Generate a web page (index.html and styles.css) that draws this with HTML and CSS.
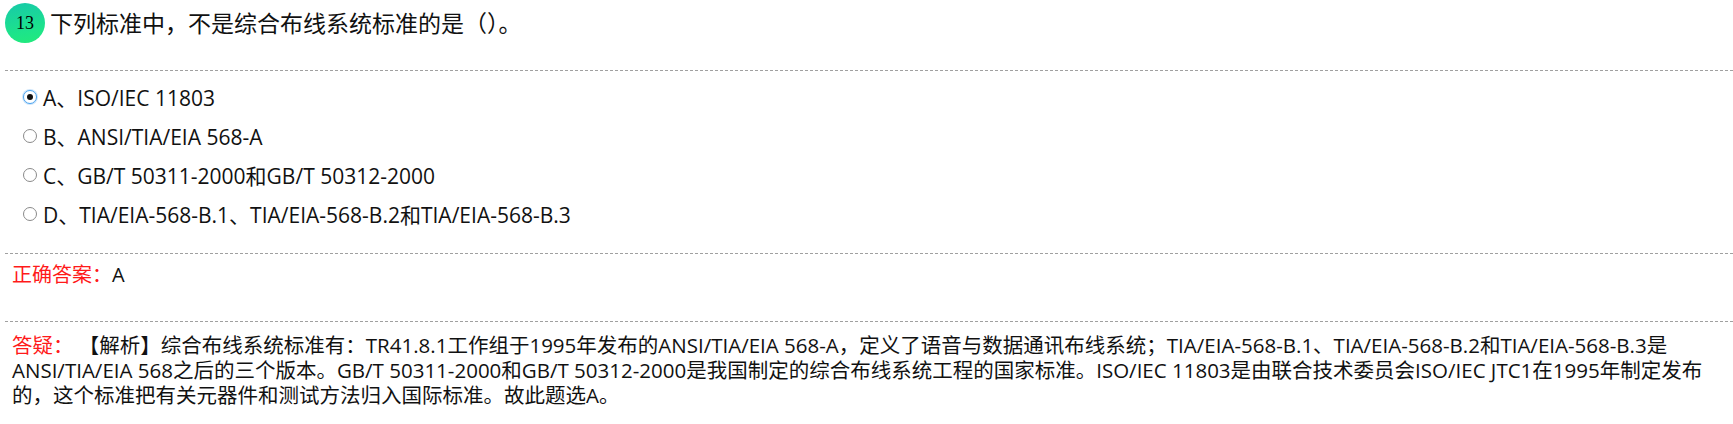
FILE: index.html
```html
<!DOCTYPE html>
<html lang="zh-CN">
<head>
<meta charset="utf-8">
<title>题目13</title>
<link rel="stylesheet" href="styles.css">
</head>
<body>
<div class="question">
  <div class="title-row">
    <span class="badge">13</span>
    <span class="title">下列标准中，不是综合布线系统标准的是（）。</span>
  </div>
  <div class="sep"></div>
  <ul class="options">
    <li class="option"><span class="radio checked"></span><span class="opt-text">A、ISO/IEC 11803</span></li>
    <li class="option"><span class="radio"></span><span class="opt-text">B、ANSI/TIA/EIA 568-A</span></li>
    <li class="option"><span class="radio"></span><span class="opt-text">C、GB/T 50311-2000和GB/T 50312-2000</span></li>
    <li class="option"><span class="radio"></span><span class="opt-text">D、TIA/EIA-568-B.1、TIA/EIA-568-B.2和TIA/EIA-568-B.3</span></li>
  </ul>
  <div class="sep"></div>
  <div class="answer"><span class="label">正确答案：</span>A</div>
  <div class="sep"></div>
  <div class="explain"><span class="label">答疑：</span> 【解析】综合布线系统标准有：TR41.8.1工作组于1995年发布的ANSI/TIA/EIA 568-A，定义了语音与数据通讯布线系统；TIA/EIA-568-B.1、TIA/EIA-568-B.2和TIA/EIA-568-B.3是<span class="nw">ANSI/TIA/EIA</span> 568之后的三个版本。GB/T 50311-2000和GB/T 50312-2000是我国制定的综合布线系统工程的国家标准。ISO/IEC 11803是由联合技术委员会ISO/IEC JTC1在1995年制定发布的，这个标准把有关元器件和测试方法归入国际标准。故此题选A。</div>
</div>
</body>
</html>
```

FILE: styles.css
```css
html, body {
  margin: 0;
  padding: 0;
  background: #fff;
  overflow: hidden;
}

body {
  font-family: "Open Sans", "Noto Sans CJK SC", sans-serif;
  color: #111;
}

.question {
  margin-left: 5px;
}

.title-row {
  display: flex;
  align-items: center;
  height: 44px;
  padding-top: 1px;
}

.badge {
  width: 40px;
  height: 40px;
  border-radius: 50%;
  background: linear-gradient(170deg, #17c9a9 0%, #1de48a 70%, #22ea7a 100%);
  display: flex;
  align-items: center;
  justify-content: center;
  font-family: "Liberation Serif", serif;
  font-size: 18px;
  color: #000;
  flex: none;
}

.title {
  margin-left: 5px;
  font-size: 23px;
  line-height: 30px;
  color: #111;
}

.sep {
  border-top: 1px dashed #a0a0a0;
}

.title-row + .sep {
  margin-top: 25px;
}

.options {
  list-style: none;
  margin: 0;
  padding: 6px 0 20px 0;
}

.option {
  display: flex;
  align-items: center;
  height: 39px;
  font-size: 21px;
}

.radio {
  width: 14px;
  height: 14px;
  box-sizing: border-box;
  border: 1px solid #8a8a8a;
  border-radius: 50%;
  background: #fff;
  margin-left: 18px;
  margin-right: 6px;
  display: flex;
  align-items: center;
  justify-content: center;
  flex: none;
}

.radio.checked {
  border-color: #4aa3ee;
  box-shadow: 0 0 0 1px #cfe6fb;
}

.radio.checked::after {
  content: "";
  width: 6px;
  height: 6px;
  border-radius: 50%;
  background: #111;
}

.answer {
  font-size: 20px;
  line-height: 26px;
  padding: 8px 7px 33px 7px;
}

.label {
  color: #ff1a1a;
}

.explain {
  font-size: 20.5px;
  line-height: 25px;
  padding: 11px 21px 10px 7px;
}

.nw {
  white-space: nowrap;
}
```
